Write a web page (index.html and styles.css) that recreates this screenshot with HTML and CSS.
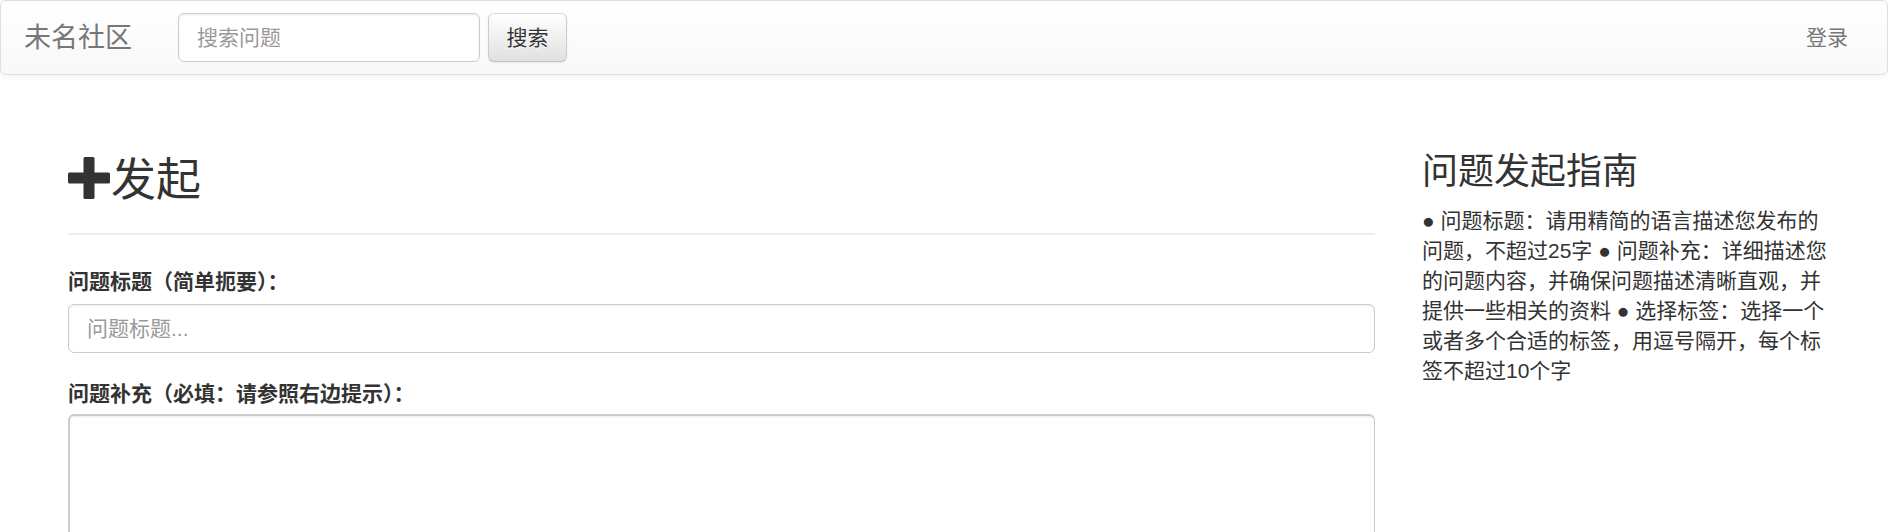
FILE: index.html
```html
<!DOCTYPE html>
<html lang="zh-CN">
<head>
<meta charset="utf-8">
<title>发起 - 未名社区</title>
<link rel="stylesheet" href="styles.css">
</head>
<body>
<nav class="navbar">
  <a class="brand" href="#">未名社区</a>
  <form class="search">
    <input class="search-input" type="text" placeholder="搜索问题">
    <button class="btn" type="button">搜索</button>
  </form>
  <a class="login" href="#">登录</a>
</nav>
<main class="page">
  <section class="main-col">
    <h2 class="page-title"><svg class="plus" viewBox="0 0 42 42" width="42" height="42" aria-hidden="true"><rect x="15.5" y="0" width="11" height="42" rx="1.5"/><rect x="0" y="15.5" width="42" height="11" rx="1.5"/></svg><span>发起</span></h2>
    <form class="ask-form">
      <div class="group">
        <label class="label" for="title">问题标题（简单扼要）：</label>
        <input class="field" id="title" type="text" placeholder="问题标题...">
      </div>
      <div class="group group-second">
        <label class="label" for="desc">问题补充（必填：请参照右边提示）：</label>
        <textarea class="field area" id="desc"></textarea>
      </div>
    </form>
  </section>
  <aside class="side">
    <h3 class="side-title">问题发起指南</h3>
    <p class="side-text">● 问题标题：请用精简的语言描述您发布的问题，不超过25字 ● 问题补充：详细描述您的问题内容，并确保问题描述清晰直观，并提供一些相关的资料 ● 选择标签：选择一个或者多个合适的标签，用逗号隔开，每个标签不超过10个字</p>
  </aside>
</main>
</body>
</html>
```

FILE: styles.css
```css
* {
  box-sizing: border-box;
}

html, body {
  margin: 0;
  padding: 0;
  background: #fff;
}

body {
  font-family: "Liberation Sans", "Noto Sans CJK SC", sans-serif;
  font-size: 21px;
  line-height: 30px;
  color: #333;
  overflow: hidden;
}

/* ---------- navbar ---------- */
.navbar {
  display: flex;
  align-items: center;
  height: 75px;
  border: 1px solid #dedede;
  border-radius: 6px;
  background: linear-gradient(to bottom, #ffffff 0%, #f8f8f8 100%);
  box-shadow: inset 0 1px 0 rgba(255, 255, 255, .15), 0 1px 7px rgba(0, 0, 0, .075);
}

.brand {
  margin-left: 23px;
  font-size: 27px;
  line-height: 30px;
  color: #777;
  text-decoration: none;
}

.search {
  display: flex;
  align-items: center;
  margin: 0 0 0 46px;
}

.search-input {
  width: 302px;
  height: 49px;
  padding: 0 18px;
  font: inherit;
  font-size: 21px;
  color: #555;
  background: #fff;
  border: 1px solid #ccc;
  border-radius: 6px;
  box-shadow: inset 0 1px 2px rgba(0, 0, 0, .075);
  outline: none;
}

.search-input::placeholder,
.field::placeholder {
  color: #999;
  opacity: 1;
}

.btn {
  width: 79px;
  height: 49px;
  margin-left: 8px;
  padding: 0;
  font: inherit;
  font-size: 21px;
  color: #333;
  text-shadow: 0 1px 0 #fff;
  background: linear-gradient(to bottom, #ffffff 0%, #e0e0e0 100%);
  border: 1px solid #ccc;
  border-color: #dbdbdb #ccc #c2c2c2;
  border-radius: 6px;
  box-shadow: inset 0 1px 0 rgba(255, 255, 255, .15), 0 1px 2px rgba(0, 0, 0, .075);
}

.login {
  margin-left: auto;
  margin-right: 39px;
  font-size: 21px;
  color: #777;
  text-decoration: none;
}

/* ---------- page ---------- */
.page {
  display: flex;
  align-items: flex-start;
  padding-left: 68px;
}

.main-col {
  width: 1307px;
  flex: none;
}

.page-title {
  display: flex;
  align-items: center;
  margin: 79px 0 0;
  padding-bottom: 25px;
  border-bottom: 2px solid #eee;
  font-size: 45px;
  line-height: 54px;
  font-weight: 400;
  color: #333;
}

.plus {
  display: block;
  width: 42px;
  height: 42px;
  margin-right: 1px;
  margin-bottom: 6px;
  fill: #333;
}

.ask-form {
  margin: 0;
}

.group {
  display: flex;
  flex-direction: column;
  margin-top: 32px;
}

.group-second {
  margin-top: 26px;
}

.label {
  font-weight: 700;
  line-height: 30px;
  color: #333;
}

.field {
  display: block;
  width: 100%;
  height: 49px;
  margin-top: 7px;
  padding: 0 18px;
  font: inherit;
  font-size: 21px;
  color: #555;
  background: #fff;
  border: 1px solid #ccc;
  border-radius: 6px;
  box-shadow: inset 0 1px 2px rgba(0, 0, 0, .075);
  outline: none;
}

.area {
  height: 220px;
  margin-top: 5px;
  padding: 9px 18px;
  resize: none;
  border-width: 2px 1px 1px 2px;
}

/* ---------- side ---------- */
.side {
  width: 410px;
  flex: none;
  margin-left: 47px;
}

.side-title {
  margin: 77px 0 0;
  font-size: 36px;
  line-height: 40px;
  font-weight: 400;
  color: #333;
}

.side-text {
  margin: 14px 0 0;
  font-size: 21px;
  line-height: 30px;
  color: #333;
}
```
